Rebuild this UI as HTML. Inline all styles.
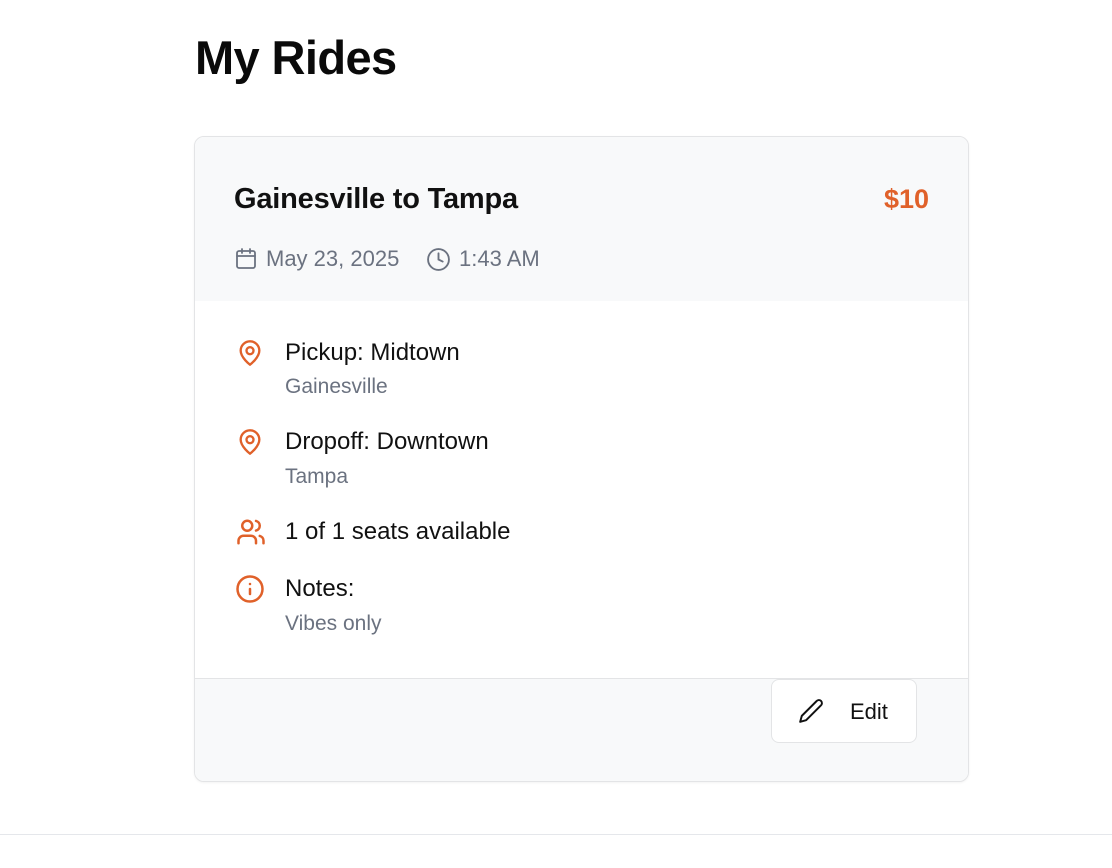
<!DOCTYPE html>
<html><head><style>
*{margin:0;padding:0;box-sizing:border-box}
body{width:1112px;height:868px;background:#fff;font-family:"Liberation Sans",sans-serif;position:relative;overflow:hidden;color:#111}
.a{position:absolute;white-space:nowrap}
h1{position:absolute;left:195px;top:30px;font-size:47px;font-weight:700;letter-spacing:-0.6px;color:#0a0a0a}
.card{position:absolute;left:194px;top:136px;width:775px;height:646px;border:1px solid #e3e4e6;border-radius:10px;overflow:hidden;box-shadow:0 1px 2px rgba(0,0,0,.05);background:#fff}
.hd{position:absolute;left:0;top:0;width:100%;height:164px;background:#f8f9fa}
.ft{position:absolute;left:0;top:541px;width:100%;height:105px;background:#f8f9fa;border-top:1px solid #e3e4e6}
.g{color:#6b7280}
.m{font-size:24px;color:#111}
.s{font-size:21px;color:#6b7280}
svg{position:absolute}
</style></head><body>
<h1>My Rides</h1>
<div class="card">
<div class="hd"></div>
<div class="ft"></div>
<div class="a" style="left:39px;top:46px;font-size:29px;font-weight:700;letter-spacing:-0.2px">Gainesville to Tampa</div>
<div class="a" style="right:39px;top:47px;font-size:27px;font-weight:700;color:#e0612a">$10</div>
<svg style="left:39px;top:110px" width="24" height="24" viewBox="0 0 24 24" fill="none" stroke="#6b7280" stroke-width="1.8" stroke-linecap="round"><rect x="3" y="4" width="18" height="17" rx="2"/><path d="M3 9h18M8 2v4M16 2v4"/></svg>
<div class="a g" style="left:71px;top:109px;font-size:22px">May 23, 2025</div>
<svg style="left:231px;top:110px" width="25" height="25" viewBox="0 0 24 24" fill="none" stroke="#6b7280" stroke-width="1.8" stroke-linecap="round"><circle cx="12" cy="12" r="10"/><path d="M12 6v6l4 2"/></svg>
<div class="a g" style="left:264px;top:109px;font-size:22px">1:43 AM</div>

<svg style="left:41px;top:201px" width="28" height="30" viewBox="0 0 24 24" fill="none" stroke="#e0612a" stroke-width="2" stroke-linecap="round" stroke-linejoin="round"><path d="M20 10c0 6-8 12-8 12s-8-6-8-12a8 8 0 0 1 16 0Z"/><circle cx="12" cy="10" r="3"/></svg>
<div class="a m" style="left:90px;top:202px">Pickup: Midtown</div>
<div class="a s" style="left:90px;top:238px">Gainesville</div>
<svg style="left:41px;top:290px" width="28" height="30" viewBox="0 0 24 24" fill="none" stroke="#e0612a" stroke-width="2" stroke-linecap="round" stroke-linejoin="round"><path d="M20 10c0 6-8 12-8 12s-8-6-8-12a8 8 0 0 1 16 0Z"/><circle cx="12" cy="10" r="3"/></svg>
<div class="a m" style="left:90px;top:291px">Dropoff: Downtown</div>
<div class="a s" style="left:90px;top:328px">Tampa</div>
<svg style="left:40px;top:380px" width="32" height="30" viewBox="0 0 24 24" fill="none" stroke="#e0612a" stroke-width="2" stroke-linecap="round" stroke-linejoin="round"><path d="M16 21v-2a4 4 0 0 0-4-4H6a4 4 0 0 0-4 4v2"/><circle cx="9" cy="7" r="4"/><path d="M22 21v-2a4 4 0 0 0-3-3.87M16 3.13a4 4 0 0 1 0 7.75"/></svg>
<div class="a m" style="left:90px;top:381px">1 of 1 seats available</div>
<svg style="left:40px;top:437px" width="30" height="30" viewBox="0 0 24 24" fill="none" stroke="#e0612a" stroke-width="2" stroke-linecap="round"><circle cx="12" cy="12" r="10"/><path d="M12 16v-4M12 8h.01"/></svg>
<div class="a m" style="left:90px;top:438px">Notes:</div>
<div class="a s" style="left:90px;top:475px">Vibes only</div>

<div style="position:absolute;left:576px;top:542px;width:146px;height:64px;background:#fff;border:1px solid #e3e4e6;border-radius:8px"></div>
<svg style="left:603px;top:561px" width="26" height="26" viewBox="0 0 24 24" fill="none" stroke="#111" stroke-width="1.8" stroke-linecap="round" stroke-linejoin="round"><path d="M17 3a2.85 2.85 0 1 1 4 4L7.5 20.5 2 22l1.5-5.5Z"/></svg>
<div class="a" style="left:655px;top:562px;font-size:22px">Edit</div>
</div>
<div style="position:absolute;left:0;top:834px;width:1112px;height:1px;background:#e5e7eb"></div>
</body></html>
